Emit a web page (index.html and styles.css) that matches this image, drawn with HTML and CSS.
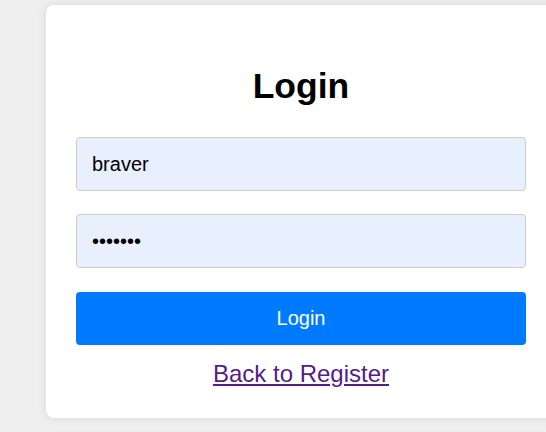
FILE: index.html
```html
<!DOCTYPE html>
<html>
<head>
<meta charset="utf-8">
<link rel="stylesheet" href="styles.css">
</head>
<body>
<div class="card">
  <h2 class="title">Login</h2>
  <form class="form">
    <input class="field" type="text" value="braver">
    <input class="field" type="password" value="1234567">
    <button class="btn" type="button">Login</button>
  </form>
  <a class="link" href="#">Back to Register</a>
</div>
</body>
</html>
```
FILE: styles.css
```css
html, body {
  margin: 0;
  padding: 0;
  background: #efefef;
  overflow: hidden;
  font-family: "Liberation Sans", Arial, sans-serif;
}
body {
  width: 546px;
  height: 432px;
}
.card {
  box-sizing: border-box;
  margin: 5px 0 0 46px;
  width: 510px;
  height: 413px;
  padding: 61px 30px 30px;
  background: #fff;
  border-radius: 8px;
  box-shadow: 0 0 10px rgba(0, 0, 0, 0.1);
  text-align: center;
}
.title {
  margin: 0 0 31px;
  font-size: 35.5px;
  font-weight: bold;
  color: #000;
  line-height: 40px;
}
.form {
  display: flex;
  flex-direction: column;
  margin: 0;
}
.field {
  box-sizing: border-box;
  height: 54px;
  margin: 0 0 23px;
  padding: 0 15px;
  border: 1px solid #ccc;
  border-radius: 4px;
  background: #e8f0fe;
  font-family: "Liberation Sans", Arial, sans-serif;
  font-size: 20px;
  color: #000;
  outline: none;
}
.field + .field {
  margin-bottom: 24px;
}
.btn {
  height: 53px;
  border: none;
  border-radius: 4px;
  background: #007bff;
  color: #fff;
  font-family: "Liberation Sans", Arial, sans-serif;
  font-size: 20px;
  padding: 0;
}
.link {
  display: inline-block;
  margin-top: 15px;
  font-size: 24px;
  color: #551a8b;
  text-decoration: underline;
}
```
